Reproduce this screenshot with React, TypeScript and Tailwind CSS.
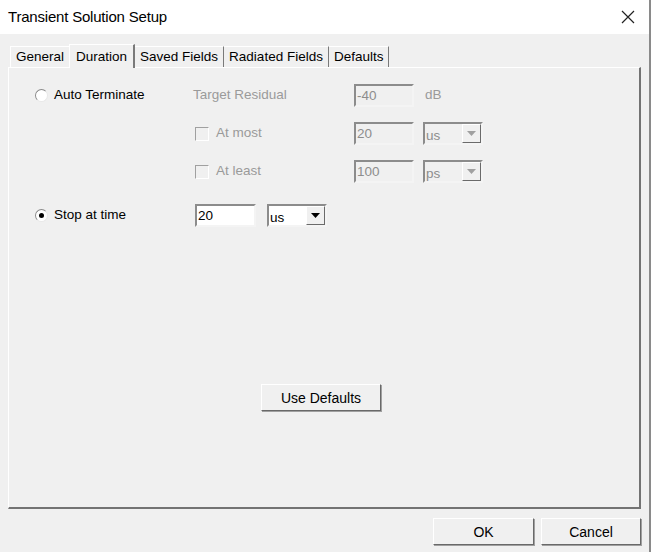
import React from 'react';

const font = { fontFamily: '"Liberation Sans", Arial, sans-serif' };

function Radio({ checked }: { checked?: boolean }) {
  return (
    <span className="w-[13px] h-[13px] rounded-full bg-white border border-t-[#8a8a8a] border-l-[#8a8a8a] border-b-[#e8e8e8] border-r-[#e8e8e8] flex items-center justify-center shrink-0">
      {checked && <span className="w-[5px] h-[5px] rounded-full bg-black" />}
    </span>
  );
}

function Check() {
  return (
    <span className="w-[14px] h-[14px] bg-[#f0f0f0] border border-t-[#a0a0a0] border-l-[#a0a0a0] border-b-white border-r-white shrink-0" />
  );
}

function Field({ value, disabled, w = 'w-[60px]' }: { value: string; disabled?: boolean; w?: string }) {
  return (
    <div
      className={`${w} h-[23px] border-2 border-t-[#8c8c8c] border-l-[#8c8c8c] border-b-[#f4f4f4] border-r-[#f4f4f4] px-[1px] flex items-center leading-none ${
        disabled ? 'bg-[#f0f0f0] text-[#8d8d8d]' : 'bg-white text-black'
      }`}
    >
      {value}
    </div>
  );
}

function Select({ value, disabled }: { value: string; disabled?: boolean }) {
  return (
    <div
      className={`w-[60px] h-[23px] border-2 border-t-[#8c8c8c] border-l-[#8c8c8c] border-b-[#f4f4f4] border-r-[#f4f4f4] flex items-stretch ${
        disabled ? 'bg-[#f0f0f0] text-[#8d8d8d]' : 'bg-white text-black'
      }`}
    >
      <span className="flex-1 flex items-end pb-[1px] pl-[1px] leading-none">{value}</span>
      <span className="w-[19px] bg-[#f0f0f0] border border-t-white border-l-white border-b-[#6a6a6a] border-r-[#6a6a6a] flex items-center justify-center">
        <svg width="9" height="5" viewBox="0 0 9 5">
          <path d="M0 0h9L4.5 5z" fill={disabled ? '#a0a0a0' : '#000'} />
        </svg>
      </span>
    </div>
  );
}

function Button({ children, w }: { children: React.ReactNode; w: string }) {
  return (
    <button className={`${w} h-[27px] bg-[#f0f0f0] border border-t-white border-l-white border-b-[#696969] border-r-[#696969] shadow-[1px_1px_0_#a0a0a0] text-[14px] text-black leading-none`}>
      {children}
    </button>
  );
}

const tabs = ['General', 'Duration', 'Saved Fields', 'Radiated Fields', 'Defaults'];

export default function App() {
  return (
    <div className="w-[651px] h-[552px] bg-[#f0f0f0] flex flex-col relative overflow-hidden text-[13.5px] text-black" style={font}>
      {/* title bar */}
      <div className="h-[34px] bg-white flex items-center justify-between pl-2 pr-[16px] shrink-0">
        <span className="text-[15px] tracking-[-0.2px]">Transient Solution Setup</span>
        <svg width="14" height="14" viewBox="0 0 14 14">
          <path d="M1 1l12 12M13 1L1 13" stroke="#222" strokeWidth="1.2" />
        </svg>
      </div>

      {/* tabs */}
      <div className="flex items-end pl-[10px] mt-[9px] h-[24px] relative z-10">
        {tabs.map((t, i) =>
          i === 1 ? (
            <div key={t} className="h-[24px] px-[6px] bg-[#f0f0f0] border-t border-l border-t-white border-l-white border-r-2 border-r-[#7a7a7a] flex items-start pt-[2px] -mb-[1px]">
              {t}
            </div>
          ) : (
            <div key={t} className={`h-[21px] px-[5px] border-t border-t-white flex items-center ${i === 0 ? 'border-l border-l-white' : 'border-r border-r-[#7a7a7a]'}`}>
              {t}
            </div>
          )
        )}
      </div>

      {/* panel */}
      <div className="mx-[8px] w-[633px] h-[442px] border-t border-l border-t-white border-l-white border-b-2 border-r-2 border-b-[#737373] border-r-[#737373] flex flex-col">
        <div className="grid grid-cols-[158px_161px_69px_auto] pl-[26px] pt-[16px] items-center">
          <div className="h-[23px] flex items-center gap-[6px]">
            <Radio />
            <span>Auto Terminate</span>
          </div>
          <span className="text-[#9a9a9a]">Target Residual</span>
          <Field value="-40" disabled />
          <span className="text-[#9a9a9a] pl-[2px]">dB</span>

          <div className="h-[23px] mt-[15px]" />
          <div className="flex items-center gap-[7px] mt-[15px] pl-[2px] text-[#9a9a9a]">
            <Check />
            <span>At most</span>
          </div>
          <div className="mt-[15px]">
            <Field value="20" disabled />
          </div>
          <div className="mt-[15px]">
            <Select value="us" disabled />
          </div>

          <div className="h-[23px] mt-[15px]" />
          <div className="flex items-center gap-[7px] mt-[15px] pl-[2px] text-[#9a9a9a]">
            <Check />
            <span>At least</span>
          </div>
          <div className="mt-[15px]">
            <Field value="100" disabled />
          </div>
          <div className="mt-[15px]">
            <Select value="ps" disabled />
          </div>

          <div className="h-[23px] mt-[21px] flex items-center gap-[6px]">
            <Radio checked />
            <span>Stop at time</span>
          </div>
          <div className="mt-[21px] pl-[2px] flex items-center gap-[11px] col-span-3">
            <Field value="20" w="w-[61px]" />
            <Select value="us" />
          </div>
        </div>

        <div className="flex justify-center mt-[157px] pr-[6px]">
          <Button w="w-[120px]">Use Defaults</Button>
        </div>
      </div>

      {/* footer */}
      <div className="flex justify-end gap-[7px] pr-[10px] mt-[9px]">
        <Button w="w-[101px]">OK</Button>
        <Button w="w-[100px]">Cancel</Button>
      </div>

      {/* window edge */}
      <div className="absolute top-0 right-0 w-[2px] h-full bg-[#8a8a8a]" />
    </div>
  );
}
